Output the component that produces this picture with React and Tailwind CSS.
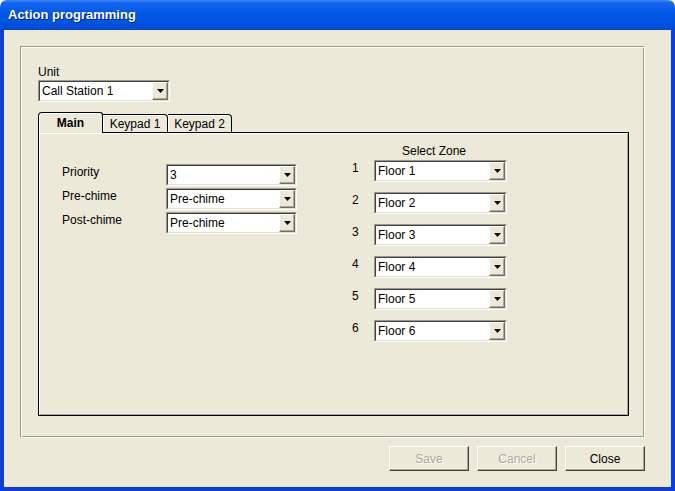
import React from 'react';

const zones = ['Floor 1', 'Floor 2', 'Floor 3', 'Floor 4', 'Floor 5', 'Floor 6'];
const mainRows = [
  { label: 'Priority', value: '3' },
  { label: 'Pre-chime', value: 'Pre-chime' },
  { label: 'Post-chime', value: 'Pre-chime' },
];

const Combo = ({ value, className }) => (
  <div className={`${className} h-[22px] flex border border-t-[#9d9a8a] border-l-[#9d9a8a] border-b-white border-r-white`}>
    <div className="flex flex-1 min-w-0 items-center border border-t-[#404040] border-l-[#404040] border-b-[#e2dfd0] border-r-[#e2dfd0] bg-white">
      <span className="flex-1 pl-[2px] leading-[14px] text-black whitespace-nowrap">{value}</span>
      <div className="w-[16px] h-full flex items-center justify-center bg-[#ECE9D8] border border-t-white border-l-white border-b-[#716f64] border-r-[#716f64] shadow-[inset_-1px_-1px_0_#aca899]">
        <svg width="7" height="4" viewBox="0 0 7 4">
          <polygon points="0,0 7,0 3.5,4" fill="#000" />
        </svg>
      </div>
    </div>
  </div>
);

const Button = ({ label, disabled }) => (
  <button
    className={`w-[80px] h-[25px] flex items-center justify-center bg-[#ECE9D8] border border-t-white border-l-white border-b-[#404040] border-r-[#404040] shadow-[inset_-1px_-1px_0_#aca899] leading-[14px] ${
      disabled ? 'text-[#aca899] [text-shadow:1px_1px_0_#fff]' : 'text-black'
    }`}
  >
    {label}
  </button>
);

export default function App() {
  return (
    <div className="w-[675px] h-[491px] flex flex-col font-['Liberation_Sans',Arial,sans-serif] text-[12px] text-black">
      {/* title bar */}
      <div className="h-[30px] shrink-0 rounded-t-[7px] flex items-center pl-[8px] bg-[linear-gradient(to_bottom,#3d8af7_0%,#1465ef_10%,#0058e6_45%,#0054e3_70%,#0048d4_100%)]">
        <span className="text-white font-bold text-[13px] leading-[16px] [text-shadow:1px_1px_0_#0a1f7a]">
          Action programming
        </span>
      </div>

      {/* window body */}
      <div className="flex-1 flex flex-col bg-[#ECE9D8] border-x-4 border-b-4 border-[#0b3fd8] pl-[16px] pt-[16px]">
        {/* group box */}
        <div className="w-[625px] h-[392px] border border-t-[#9d9a8a] border-l-[#9d9a8a] border-b-white border-r-white shadow-[inset_1px_1px_0_#fff,inset_-1px_-1px_0_#9d9a8a] pl-[17px] pt-[18px] flex flex-col">
          <div className="leading-[14px]">Unit</div>
          <Combo value="Call Station 1" className="w-[132px] mt-[1px]" />

          {/* tabs */}
          <div className="flex items-end h-[20px] mt-[10px]">
            <div className="relative z-10 w-[65px] h-[21px] -mb-[1px] flex items-center justify-center font-bold bg-[#ECE9D8] border border-b-0 border-black rounded-tl-[4px] rounded-tr-[3px] shadow-[inset_1px_1px_0_#fff] pb-[1px]">
              Main
            </div>
            <div className="w-[65px] h-[18px] flex items-center justify-center bg-[#ECE9D8] border border-b-0 border-l-0 border-black rounded-tr-[4px] shadow-[inset_1px_1px_0_#fff]">
              Keypad 1
            </div>
            <div className="w-[64px] h-[18px] flex items-center justify-center bg-[#ECE9D8] border border-b-0 border-l-0 border-black rounded-tr-[4px] shadow-[inset_1px_1px_0_#fff]">
              Keypad 2
            </div>
          </div>

          {/* tab panel */}
          <div className="w-[591px] h-[284px] border border-black shadow-[inset_1px_1px_0_#fff,inset_-1px_-1px_0_#aca899] flex items-start">
            <div className="pl-[23px] pt-[31px] flex flex-col gap-[2px]">
              {mainRows.map((r) => (
                <div key={r.label} className="flex items-start">
                  <div className="w-[104px] leading-[14px] pt-[1px]">{r.label}</div>
                  <Combo value={r.value} className="w-[131px]" />
                </div>
              ))}
            </div>

            <div className="ml-[55px] pt-[11px] flex flex-col">
              <div className="leading-[14px] h-[14px] pl-[50px] mb-[2px]">Select Zone</div>
              <div className="flex flex-col gap-[10px]">
                {zones.map((z, i) => (
                  <div key={z} className="flex items-start">
                    <div className="w-[22px] leading-[14px] pt-[1px]">{i + 1}</div>
                    <Combo value={z} className="w-[133px]" />
                  </div>
                ))}
              </div>
            </div>
          </div>
        </div>

        {/* buttons */}
        <div className="w-[625px] flex justify-end gap-[8px] mt-[8px]">
          <Button label="Save" disabled />
          <Button label="Cancel" disabled />
          <Button label="Close" />
        </div>
      </div>
    </div>
  );
}
